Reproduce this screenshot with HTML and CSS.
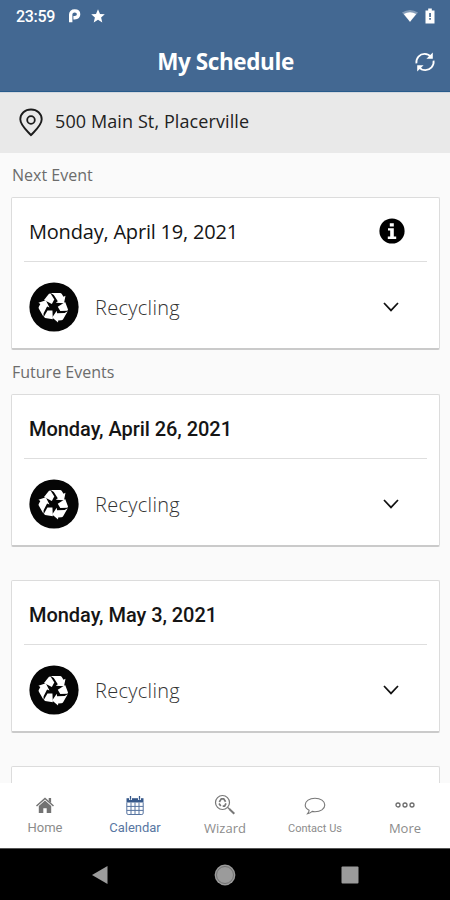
FILE: index.html
```html
<!DOCTYPE html>
<html lang="en">
<head>
  <meta charset="UTF-8" />
  <meta name="viewport" content="width=device-width, initial-scale=1.0"/>
  <title>My Schedule</title>
  <link rel="stylesheet" href="styles.css">
</head>
<body>

  <!-- Shared icons -->
  <svg class="sprite" aria-hidden="true">
    <symbol id="recycle" viewBox="0 0 50 50">
      <circle cx="25" cy="25" r="24.6" fill="#050505"/>
      <g id="arm" fill="#fff">
        <path d="M21.8 11h9.2q1.2 0 1.8 1l1.7 2.7 2-1-1.5 7.6-8.2-.5 2-1.6-4-6.3z"/>
        <path d="M20 11.8l1.6-.4 3.7 6.2-2.5 4.3-7.8-4z"/>
      </g>
      <use href="#arm" transform="rotate(120 25 25)"/>
      <use href="#arm" transform="rotate(240 25 25)"/>
    </symbol>
    <symbol id="chevron" viewBox="0 0 18 12">
      <path d="M2 2l7 7.4L16 2" fill="none" stroke="#111" stroke-width="1.7"/>
    </symbol>
  </svg>

  <div class="status-bar">
    <span class="time">23:59</span>
    <svg class="parking" width="13" height="14" viewBox="0 0 13 14">
      <path d="M2.7 13.2V5.6c0-2.3 1.5-3.7 4-3.7s3.9 1.3 3.9 3.4-1.5 3.4-3.9 3.4H5.4" fill="none" stroke="#fff" stroke-width="3.4"/>
    </svg>
    <svg class="star" width="14" height="14" viewBox="0 0 14 14">
      <path d="M7 .3l2 4.6 4.8.4-3.7 3.2 1.2 4.9L7 10.8l-4.3 2.6 1.2-4.9L.2 5.3 5 4.9z" fill="#fff"/>
    </svg>
    <div class="status-right">
      <svg width="16" height="14" viewBox="0 0 16 14">
        <path d="M0 3.6Q8-1.6 16 3.6L8 13z" fill="#fff" opacity=".35"/>
        <path d="M1.8 5Q8 1.6 14.2 5L8 12.8z" fill="#fff"/>
      </svg>
      <svg width="10" height="16" viewBox="0 0 10 16">
        <path d="M.5 2.6h2.7V.5h3.6v2.1h2.7v13H.5z" fill="#fff"/>
        <path d="M4.2 5h1.7v4H4.2zM4.2 10h1.7v1.7H4.2z" fill="#436892"/>
      </svg>
    </div>
  </div>

  <header>
    <h1>My Schedule</h1>
    <svg class="refresh" width="20" height="20" viewBox="0 0 20 20">
      <g fill="none" stroke="#fff" stroke-width="1.8">
        <path d="M1.4 11.4C.8 6 4.8 1.9 9.6 1.9c2.7 0 5 1.2 6.4 3.2"/>
        <path d="M18.6 8.6c.6 5.4-3.4 9.5-8.2 9.5-2.7 0-5-1.2-6.4-3.2"/>
      </g>
      <path d="M17.8.6v6.2h-6.4zM2.2 19.4v-6.2h6.4z" fill="#fff"/>
    </svg>
  </header>

  <div class="address">
    <svg width="26" height="30" viewBox="0 0 26 30">
      <path d="M13 28.2C9.5 24.1 2.3 18.5 2.3 12.3 2.3 6.4 7 2.5 13 2.5s10.7 3.9 10.7 9.8c0 6.2-7.2 11.8-10.7 15.9z" fill="none" stroke="#1c1c1c" stroke-width="1.9" stroke-linejoin="round"/>
      <circle cx="13" cy="13" r="3.8" fill="none" stroke="#1c1c1c" stroke-width="1.8"/>
    </svg>
    <span>500 Main St, Placerville</span>
  </div>

  <main>
    <h2>Next Event</h2>
    <div class="card next">
      <div class="card-date">
        <span>Monday, April 19, 2021</span>
        <svg class="info" width="26" height="26" viewBox="0 0 26 26">
          <circle cx="13" cy="13" r="12.6" fill="#000"/>
          <path d="M10.8 5.2h4v3.4h-4zM9 10.2h5.8v8.3h2.4v2.4H8.8v-2.4h2.4v-5.9H9z" fill="#fff"/>
        </svg>
      </div>
      <div class="card-item">
        <svg class="badge"><use href="#recycle"/></svg>
        <span>Recycling</span>
        <svg class="arrow"><use href="#chevron"/></svg>
      </div>
    </div>

    <h2>Future Events</h2>
    <div class="card">
      <div class="card-date"><span>Monday, April 26, 2021</span></div>
      <div class="card-item">
        <svg class="badge"><use href="#recycle"/></svg>
        <span>Recycling</span>
        <svg class="arrow"><use href="#chevron"/></svg>
      </div>
    </div>
    <div class="card">
      <div class="card-date"><span>Monday, May 3, 2021</span></div>
      <div class="card-item">
        <svg class="badge"><use href="#recycle"/></svg>
        <span>Recycling</span>
        <svg class="arrow"><use href="#chevron"/></svg>
      </div>
    </div>
    <div class="card"></div>
  </main>

  <!-- App tabs -->
  <nav class="tabs">
    <div class="tab home">
      <svg width="20" height="20" viewBox="0 0 20 20">
        <path d="M1.5 10L10 2.5l8.5 7.5" fill="none" stroke="#737373" stroke-width="1.5"/>
        <path d="M13.7 2h2.4v5l-2.4-2zM3.8 9.9L10 4.5l6.2 5.4v7h-4.5v-4.6H8.3v4.6H3.8z" fill="#737373"/>
      </svg>
      <span>Home</span>
    </div>
    <div class="tab calendar active">
      <svg width="20" height="20" viewBox="0 0 20 20">
        <path d="M1.5 2.2h17v4.3h-17z" fill="#36588a"/>
        <path d="M5.5 0v4M14.5 0v4" stroke="#fff" stroke-width="3"/>
        <path d="M5.5 0v3.8M14.5 0v3.8" stroke="#36588a" stroke-width="1.3"/>
        <path d="M1.8 6.5v10.6q0 1.4 1.4 1.4h13.6q1.4 0 1.4-1.4V6.5M1.8 10.4h16.4M1.8 14.4h16.4M6 6.5v12M10 6.5v12M14 6.5v12" fill="none" stroke="#5774a0" stroke-width="1"/>
      </svg>
      <span>Calendar</span>
    </div>
    <div class="tab wizard">
      <svg width="22" height="22" viewBox="0 0 22 22">
        <g fill="none" stroke="#777">
          <circle cx="8.5" cy="8.5" r="7" stroke-width="1.2"/>
          <path d="M5.3 8l2-3.2h2.4l1.9 3M12 9.3l-1.4 2.8H8.7M6.8 12.1L5 9.5" stroke-width="1.7"/>
          <path d="M13.7 13.5l2 1.8" stroke-width="1.2"/>
          <path d="M15.3 15l5 4.8" stroke-width="2"/>
        </g>
      </svg>
      <span>Wizard</span>
    </div>
    <div class="tab contact">
      <svg width="22" height="20" viewBox="0 0 22 20">
        <path d="M5.1 14.3C2.6 13 1.2 11 1.2 9c0-4 4.3-6.8 9.8-6.8S20.8 5 20.8 9s-4.3 6.7-9.8 6.7c-1 0-1.9-.1-2.8-.3-1.3 1.3-2.7 2-4.6 2.3.9-1 1.5-2.1 1.5-3.4z" fill="none" stroke="#777" stroke-width="1.1"/>
      </svg>
      <span>Contact Us</span>
    </div>
    <div class="tab more">
      <svg width="20" height="20" viewBox="0 0 20 20">
        <g fill="none" stroke="#6d6d6d" stroke-width="1.3">
          <circle cx="3" cy="10" r="2"/>
          <circle cx="10" cy="10" r="2"/>
          <circle cx="17" cy="10" r="2"/>
        </g>
      </svg>
      <span>More</span>
    </div>
  </nav>

  <!-- Android buttons -->
  <div class="system-nav">
    <svg width="18" height="20" viewBox="0 0 18 20"><path d="M1 10L16.5 1v18z" fill="#9b9b9b"/></svg>
    <svg width="22" height="22" viewBox="0 0 22 22">
      <circle cx="11" cy="11" r="10.4" fill="#9b9b9b"/>
      <circle cx="11" cy="11" r="8.5" fill="none" stroke="#666" stroke-width=".8"/>
    </svg>
    <svg width="18" height="18" viewBox="0 0 18 18"><rect x=".5" y=".5" width="17" height="17" rx="1" fill="#9b9b9b"/></svg>
  </div>

</body>
</html>
```
FILE: styles.css
```css
:root {
  --primary: #436892;
  --background: #fafafa;
}

* {
  box-sizing: border-box;
}

body {
  margin: 0;
  height: 900px;
  display: flex;
  flex-direction: column;
  overflow: hidden;
  font-family: "Open Sans", sans-serif;
  background-color: var(--background);
}

svg {
  display: block;
  flex-shrink: 0;
}

.sprite {
  position: absolute;
  width: 0;
  height: 0;
}

.status-bar {
  height: 32px;
  flex-shrink: 0;
  display: flex;
  align-items: center;
  padding: 0 15px 0 16px;
  background: var(--primary);
  color: white;
  font: 500 16px Roboto, sans-serif;
}

.time {
  width: 52px;
  letter-spacing: -0.3px;
}

.star {
  margin-left: 10px;
}

.status-right {
  margin-left: auto;
  display: flex;
  align-items: center;
  gap: 7px;
}

header {
  height: 60px;
  flex-shrink: 0;
  display: flex;
  align-items: center;
  padding: 0 15px 0 16px;
  background: var(--primary);
  border-bottom: 1px solid #285b8b;
  color: white;
}

header h1 {
  flex: 1;
  margin: 0 0 0 20px;
  padding-top: 1px;
  text-align: center;
  font-size: 22.5px;
  line-height: 30px;
  letter-spacing: -0.4px;
}

.address {
  height: 61px;
  flex-shrink: 0;
  display: flex;
  align-items: center;
  gap: 11px;
  padding: 0 18px 2px;
  background: #e9e9e9;
  border-top: 1px solid #d3d8df;
  color: #222;
  font-size: 18px;
  letter-spacing: 0.1px;
}

.address span {
  padding-bottom: 3px;
}

main {
  flex: 1;
  overflow: hidden;
  padding: 0 10px 0 11px;
}

h2 {
  height: 44px;
  margin: 0 0 0 1px;
  line-height: 45px;
  font-size: 16px;
  font-weight: 400;
  color: #6c6c6c;
}

.card {
  height: 153px;
  margin-bottom: 33px;
  padding: 0 12px;
  background: white;
  border: 1px solid #dcdcdc;
  border-bottom: 2px solid #cacaca;
  border-radius: 2px;
}

.card.next {
  margin-bottom: 0;
}

.card-date {
  height: 64px;
  display: flex;
  align-items: center;
  justify-content: space-between;
  padding: 5px 22px 0 5px;
  border-bottom: 1px solid #dedede;
  color: #151515;
  font: 500 20px Roboto, sans-serif;
  letter-spacing: -0.05px;
}

.next .card-date {
  padding-top: 3px;
  font: 400 20px "Open Sans", sans-serif;
  letter-spacing: -0.2px;
}

.card-item {
  height: 88px;
  display: flex;
  align-items: center;
  padding: 1px 27px 0 5px;
  color: #333;
  font-size: 20px;
  font-weight: 300;
  letter-spacing: 0.3px;
}

.card-item span {
  padding-top: 1px;
}

.badge {
  width: 50px;
  height: 50px;
  margin-right: 16px;
}

.arrow {
  width: 18px;
  height: 12px;
  margin-left: auto;
}

.tabs {
  height: 65px;
  flex-shrink: 0;
  display: flex;
  background: white;
}

.tab {
  flex: 1;
  display: flex;
  flex-direction: column;
  align-items: center;
  padding-top: 12px;
  color: #8c8c8c;
  font-family: Roboto, sans-serif;
  font-size: 13px;
}

.tab svg {
  height: 22px;
}

.tab span {
  margin-top: 3px;
  line-height: 16px;
}

.active {
  color: #5876a2;
}

.wizard svg,
.more svg {
  margin-top: -1px;
}

.wizard span,
.more span {
  font-family: "Open Sans", sans-serif;
  margin-top: 4px;
}

.contact span {
  font-size: 11px;
  margin-top: 4px;
}

.system-nav {
  height: 52px;
  flex-shrink: 0;
  display: flex;
  align-items: center;
  justify-content: space-between;
  padding: 0 91px;
  background: black;
  border-top: 1px solid #555;
}
```
